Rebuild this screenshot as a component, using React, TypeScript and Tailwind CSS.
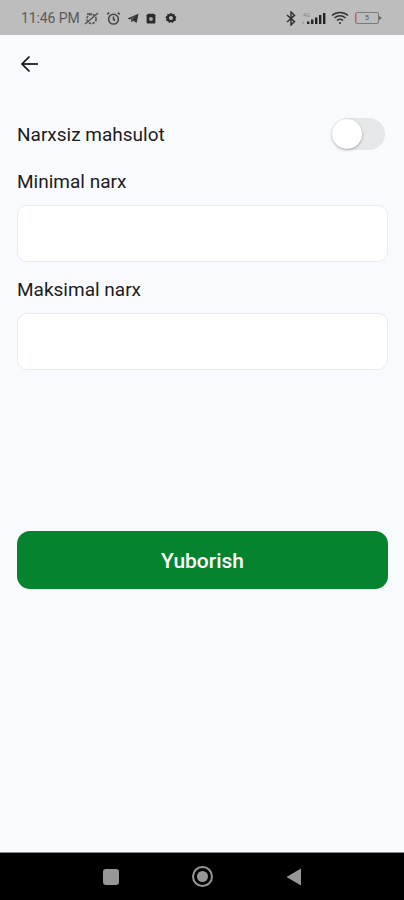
import React from "react";

function StatusBar() {
  return (
    <div className="flex h-[35px] shrink-0 items-center justify-between bg-[#bdbdbd] pl-[21px] pr-[22px] pt-[1px]">
      <div className="flex items-center text-[#4a4a4a]">
        <span className="text-[14px] leading-none tracking-[-0.1px] text-[#5a5a5a]">11:46 PM</span>
        <svg className="ml-[3px]" width="17" height="15" viewBox="0 0 17 15" fill="none" stroke="#555" strokeWidth="1.6">
          <circle cx="8.5" cy="8" r="4.6" strokeDasharray="2.5 1.2" />
          <path d="M2 13L15 2" />
          <path d="M4 3h5" />
        </svg>
        <svg className="ml-[6px]" width="15" height="15" viewBox="0 0 15 15" fill="none" stroke="#444" strokeWidth="1.5">
          <circle cx="7.5" cy="8.2" r="4.9" />
          <path d="M7.5 5.5v3l1.6 1M1.2 3.4L3.2 1.6M13.8 3.4L11.8 1.6" />
        </svg>
        <svg className="ml-[6px]" width="12" height="11" viewBox="0 0 12 11" fill="#333">
          <path d="M0.5 5.6L11.5 0.8L9.6 10L6 7.6L4.4 9.4L4 6.8L9 2.8L3 6.4Z" />
        </svg>
        <svg className="ml-[7px]" width="10" height="11" viewBox="0 0 10 11">
          <path d="M2 0.8h6l1.4 1.4v7.3a1 1 0 0 1-1 1H1.6a1 1 0 0 1-1-1V2.2Z" fill="#2c2c2c" />
          <circle cx="5" cy="6" r="1.9" fill="#aaa" />
        </svg>
        <svg className="ml-[9px]" width="12" height="12" viewBox="0 0 12 12">
          <path d="M6 0.6l1.3 1.6 2-.4.5 2 1.7 1.2-1 1.8.4 2-2 .5-1.2 1.7-1.7-1-1.8 1-1.2-1.7-2-.5.4-2-1-1.8 1.7-1.2.5-2 2 .4Z" fill="#2c2c2c" />
          <circle cx="6" cy="6" r="2" fill="#bbb" />
        </svg>
      </div>
      <div className="flex items-center">
        <svg width="10" height="15" viewBox="0 0 10 15" fill="none" stroke="#333" strokeWidth="1.5">
          <path d="M1 4l7.5 6.6L5 14V1l3.5 3.4L1 11" />
        </svg>
        <div className="relative ml-[6px] h-[13px] w-[25px]">
          <span className="absolute left-[1px] top-0 text-[6px] leading-none text-[#8a8a8a]">4G</span>
          <svg className="absolute left-0 top-0" width="25" height="13" viewBox="0 0 25 13" fill="#222">
            <rect x="0" y="10" width="2" height="1.5" fill="#999" />
            <rect x="5" y="9.5" width="2.4" height="2.5" />
            <rect x="9" y="7.5" width="2.4" height="4.5" />
            <rect x="13" y="5.5" width="2.4" height="6.5" />
            <rect x="17" y="3" width="2.4" height="9" />
            <rect x="21" y="1" width="2.4" height="11" />
          </svg>
        </div>
        <svg className="ml-[4px]" width="18" height="14" viewBox="0 0 18 14" fill="none" stroke="#333" strokeWidth="1.6">
          <path d="M1 4.5C5.5 0.5 12.5 0.5 17 4.5" />
          <path d="M3.5 7C6.8 4.2 11.2 4.2 14.5 7" />
          <path d="M6 9.5C7.8 8 10.2 8 12 9.5" />
          <circle cx="9" cy="12" r="1" fill="#333" stroke="none" />
        </svg>
        <div className="relative ml-[6px] mr-[3px] flex h-[12px] w-[24px] items-center justify-center rounded-[2px] border border-[#7a7a7a]">
          <span className="text-[7px] leading-none text-[#555]">5</span>
          <div className="absolute left-0 top-[1px] h-[8px] w-[1px] bg-[#d08a9a]" />
          <div className="absolute right-[-4px] top-[2.5px] h-0 w-0 border-y-[2.5px] border-l-[3px] border-y-transparent border-l-[#666]" />
        </div>
      </div>
    </div>
  );
}

function Field({ label }: { label: string }) {
  return (
    <div>
      <div className="pt-[1px] text-[19px] leading-[20px] text-[#1c1c1c]">{label}</div>
      <div className="mt-[13px] h-[57px] rounded-[10px] border border-[#e9ebee] bg-white" />
    </div>
  );
}

export default function App() {
  return (
    <div className="flex h-[900px] w-[404px] flex-col overflow-hidden bg-[#f9fafd] font-['Roboto',sans-serif]">
      <StatusBar />
      <div className="flex flex-1 flex-col pl-[17px] pr-[16px]">
        <div className="mt-[19px] flex h-[20px] items-center pl-[3px]">
          <svg width="19" height="18" viewBox="0 0 19 18" fill="none" stroke="#111" strokeWidth="1.7">
            <path d="M18 9H2" />
            <path d="M9.5 1.5L2 9l7.5 7.5" />
          </svg>
        </div>
        <div className="mt-[43px] flex h-[34px] items-center justify-between">
          <span className="pt-[2px] text-[19px] leading-[20px] text-[#1c1c1c]">Narxsiz mahsulot</span>
          <div className="relative mr-[3px] h-[32px] w-[53px] rounded-full bg-[#e6e7e9]">
            <div className="absolute left-0 top-[1px] h-[30px] w-[30px] rounded-full bg-white shadow-[0_1px_3px_rgba(0,0,0,0.3)]" />
          </div>
        </div>
        <div className="mt-[20px] flex flex-col gap-[17px]">
          <Field label="Minimal narx" />
          <Field label="Maksimal narx" />
        </div>
        <button className="mt-[161px] flex h-[58px] w-full items-center justify-center rounded-[13px] bg-[#05832e] pt-[3px] text-[21px] font-medium text-white">
          Yuborish
        </button>
      </div>
      <div className="flex h-[48px] shrink-0 items-center border-t border-[#8a8a8a] bg-black">
        <div className="ml-[103px] h-[16px] w-[16px] rounded-[3px] bg-[#979797]" />
        <div className="ml-[73px] flex h-[21px] w-[21px] items-center justify-center rounded-full border-2 border-[#979797]">
          <div className="h-[11px] w-[11px] rounded-full bg-[#979797]" />
        </div>
        <svg className="ml-[73px]" width="16" height="18" viewBox="0 0 16 18" fill="#979797">
          <path d="M15 0.5V17.5L0.5 9Z" />
        </svg>
      </div>
    </div>
  );
}
